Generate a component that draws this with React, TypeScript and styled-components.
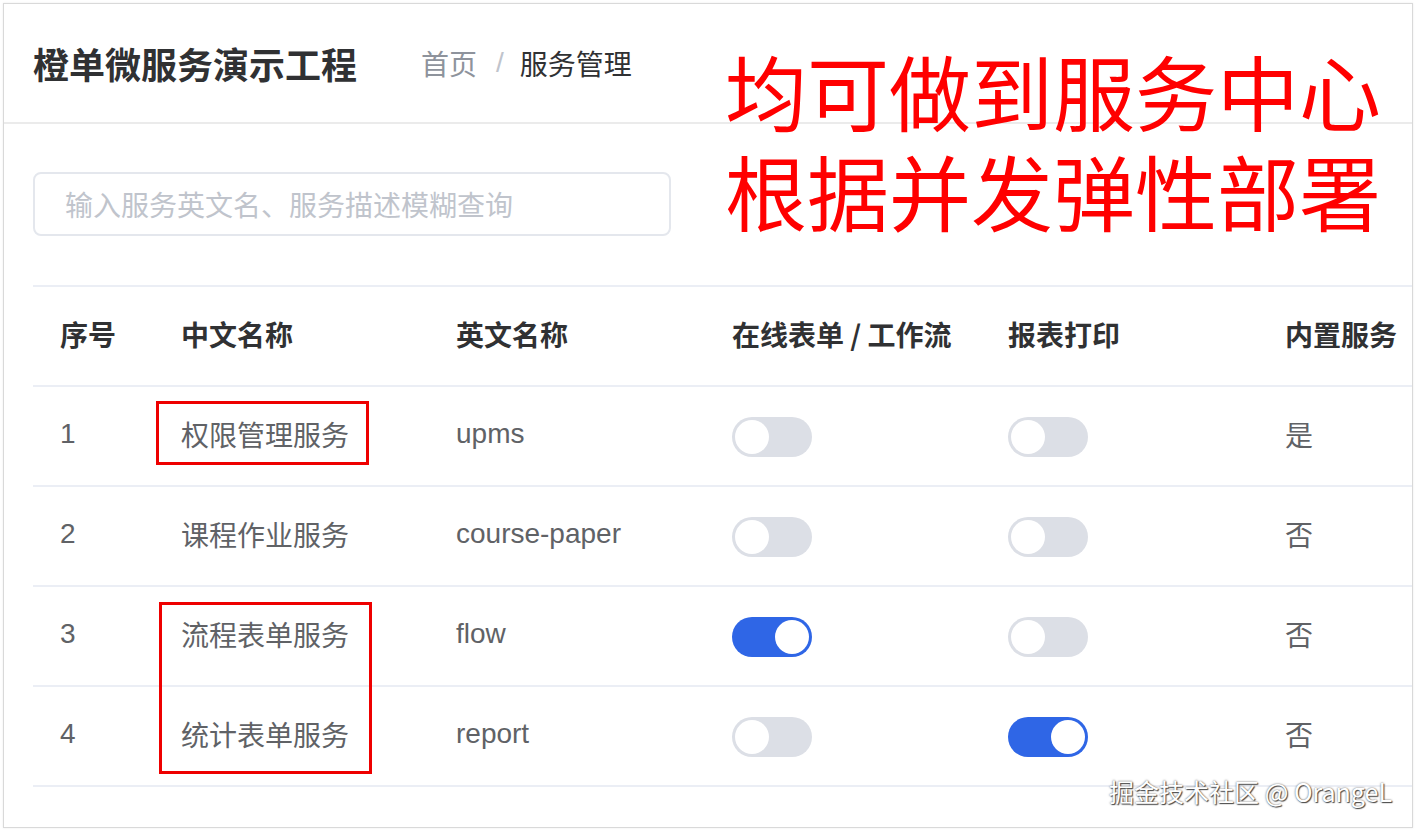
import React from 'react';
import styled, { createGlobalStyle } from 'styled-components';

const GlobalStyle = createGlobalStyle`
  html, body {
    margin: 0;
    padding: 0;
    background: #fff;
  }
  body {
    font-family: "Liberation Sans", "Noto Sans CJK SC", sans-serif;
  }
`;

type Service = {
  id: number;
  name: string;
  code: string;
  flow: boolean;
  report: boolean;
  builtin: boolean;
};

const SERVICES: Service[] = [
  { id: 1, name: '权限管理服务', code: 'upms', flow: false, report: false, builtin: true },
  { id: 2, name: '课程作业服务', code: 'course-paper', flow: false, report: false, builtin: false },
  { id: 3, name: '流程表单服务', code: 'flow', flow: true, report: false, builtin: false },
  { id: 4, name: '统计表单服务', code: 'report', flow: false, report: true, builtin: false },
];

const COLUMNS = ['序号', '中文名称', '英文名称', '在线表单 / 工作流', '报表打印', '内置服务'];

function Switch({ on }: { on: boolean }) {
  return (
    <Track $on={on}>
      <Knob $on={on} />
    </Track>
  );
}

export default function App() {
  return (
    <>
      <GlobalStyle />
      <Frame>
        <Header>
          <Title>橙单微服务演示工程</Title>
          <Crumbs>
            <CrumbLink>首页</CrumbLink>
            <CrumbSep>/</CrumbSep>
            <CrumbCurrent>服务管理</CrumbCurrent>
          </Crumbs>
        </Header>

        <Search placeholder='输入服务英文名、服务描述模糊查询' />

        <Table>
          <HeadRow>
            {COLUMNS.map((c) => (
              <HeadCell key={c}>{c}</HeadCell>
            ))}
          </HeadRow>
          {SERVICES.map((s) => (
            <Row key={s.id}>
              <Cell>{s.id}</Cell>
              <Cell>{s.name}</Cell>
              <Cell>{s.code}</Cell>
              <Cell>
                <Switch on={s.flow} />
              </Cell>
              <Cell>
                <Switch on={s.report} />
              </Cell>
              <Cell>{s.builtin ? '是' : '否'}</Cell>
            </Row>
          ))}
        </Table>

        {/* annotations drawn over the page */}
        <Note>
          <NoteLine>均可做到服务中心</NoteLine>
          <NoteLine>根据并发弹性部署</NoteLine>
        </Note>
        <Mark $left={152} $top={397} $width={213} $height={64} />
        <Mark $left={155} $top={598} $width={213} $height={172} />
        <Watermark>掘金技术社区 @ OrangeL</Watermark>
      </Frame>
    </>
  );
}

const Frame = styled.div`
  position: relative;
  margin: 3px;
  height: 825px;
  box-sizing: border-box;
  border: 1px solid #d9d9d9;
  box-shadow: 0 0 2px rgba(0, 0, 0, 0.08);
  overflow: hidden;
  background: #fff;
`;

const Header = styled.div`
  display: flex;
  align-items: center;
  height: 118px;
  padding: 0 29px;
  border-bottom: 2px solid #ebebeb;
`;

const Title = styled.div`
  font-family: "Noto Sans CJK SC", sans-serif;
  font-size: 36px;
  font-weight: 700;
  color: #303133;
`;

const Crumbs = styled.div`
  display: flex;
  align-items: center;
  margin-left: 64px;
  font-family: "Noto Sans CJK SC", sans-serif;
  font-size: 28px;
`;

const CrumbLink = styled.span`
  color: #8e939c;
`;

const CrumbSep = styled.span`
  color: #c0c4cc;
  margin: 0 16px 0 19px;
  font-family: "Liberation Sans", sans-serif;
`;

const CrumbCurrent = styled.span`
  color: #303133;
`;

const Search = styled.input`
  display: block;
  margin: 48px 0 0 29px;
  width: 638px;
  height: 64px;
  box-sizing: border-box;
  border: 2px solid #e4e7ed;
  border-radius: 8px;
  padding: 0 30px;
  font-family: "Noto Sans CJK SC", sans-serif;
  font-size: 28px;
  color: #606266;
  outline: none;

  &::placeholder {
    color: #c0c4cc;
  }
`;

const Table = styled.div`
  margin: 49px 0 0 29px;
  width: 1420px;
  border-top: 2px solid #ebeef5;
`;

const HeadRow = styled.div`
  display: grid;
  grid-template-columns: 121px 275px 276px 276px 277px 195px;
  height: 100px;
  box-sizing: border-box;
  border-bottom: 2px solid #ebeef5;
  align-items: center;
  padding-bottom: 4px;
`;

const Row = styled(HeadRow)``;

const HeadCell = styled.div`
  padding-left: 27px;
  font-family: "Noto Sans CJK SC", sans-serif;
  font-size: 28px;
  font-weight: 700;
  color: #303133;
  white-space: nowrap;
`;

const Cell = styled.div`
  display: flex;
  align-items: center;
  padding-left: 27px;
  font-size: 28px;
  color: #606266;
  white-space: nowrap;
`;

const Track = styled.div<{ $on: boolean }>`
  position: relative;
  width: 80px;
  height: 40px;
  margin-top: 6px;
  border-radius: 20px;
  background: ${(p) => (p.$on ? '#2f66e6' : '#dcdfe6')};
`;

const Knob = styled.div<{ $on: boolean }>`
  position: absolute;
  top: 3px;
  left: ${(p) => (p.$on ? '43px' : '3px')};
  width: 34px;
  height: 34px;
  border-radius: 50%;
  background: #fff;
`;

const Note = styled.div`
  position: absolute;
  left: 721px;
  top: 38px;
  font-family: "Noto Sans CJK SC", sans-serif;
  font-size: 82px;
  color: #ff0000;
  white-space: nowrap;
`;

const NoteLine = styled.div`
  height: 100px;
  line-height: 96px;
`;

const Mark = styled.div<{ $left: number; $top: number; $width: number; $height: number }>`
  position: absolute;
  left: ${(p) => p.$left}px;
  top: ${(p) => p.$top}px;
  width: ${(p) => p.$width}px;
  height: ${(p) => p.$height}px;
  box-sizing: border-box;
  border: 3px solid #ee0000;
`;

const Watermark = styled.div`
  position: absolute;
  right: 20px;
  bottom: 18px;
  font-family: "Noto Sans CJK SC", sans-serif;
  font-size: 25px;
  color: #fff;
  text-shadow: 0 0 2px #555, 1px 1px 1px #444;
  white-space: nowrap;
`;
